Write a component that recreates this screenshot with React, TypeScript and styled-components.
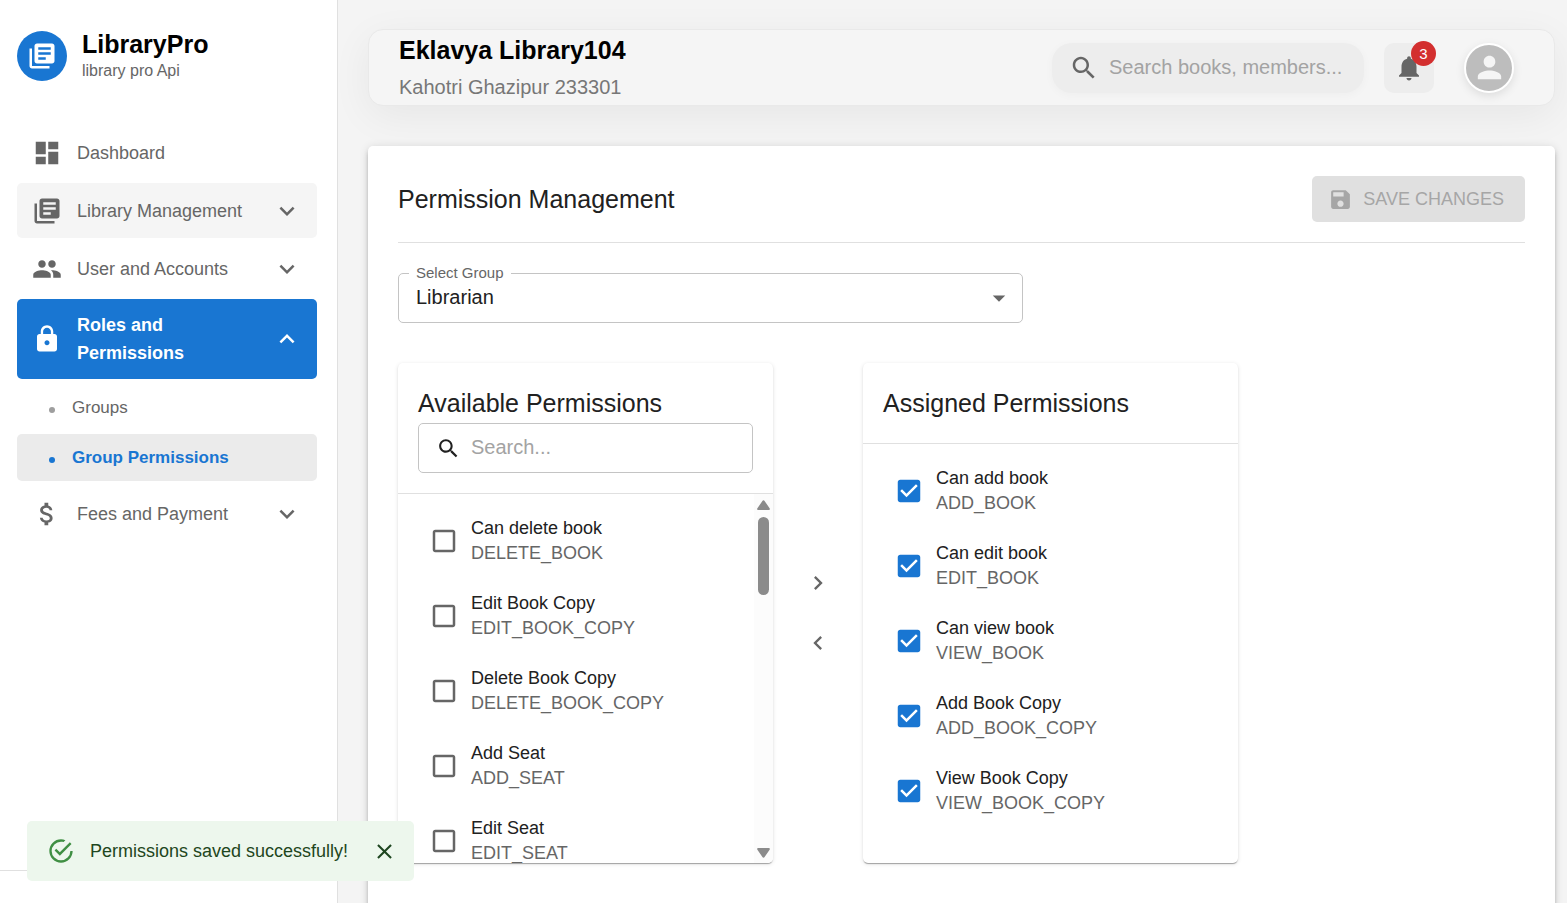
import React, { useState } from 'react';
import styled, { createGlobalStyle, css } from 'styled-components';

const color = {
  primary: '#1976d2',
  text: '#212121',
  muted: '#666666',
  line: '#e0e0e0',
  outline: '#c4c4c4',
  page: '#f4f4f4',
};

const iconPaths = {
  library:
    'M4 6H2v14c0 1.1.9 2 2 2h14v-2H4V6zm16-4H8c-1.1 0-2 .9-2 2v12c0 1.1.9 2 2 2h12c1.1 0 2-.9 2-2V4c0-1.1-.9-2-2-2zm-1 9H9V9h10v2zm-4 4H9v-2h6v2zm4-8H9V5h10v2z',
  dashboard: 'M3 13h8V3H3v10zm0 8h8v-6H3v6zm10 0h8V11h-8v10zm0-18v6h8V3h-8z',
  people:
    'M16 11c1.66 0 2.99-1.34 2.99-3S17.66 5 16 5c-1.66 0-3 1.34-3 3s1.34 3 3 3zm-8 0c1.66 0 2.99-1.34 2.99-3S9.66 5 8 5C6.34 5 5 6.34 5 8s1.34 3 3 3zm0 2c-2.33 0-7 1.17-7 3.5V19h14v-2.5c0-2.33-4.67-3.5-7-3.5zm8 0c-.29 0-.62.02-.97.05 1.16.84 1.97 1.97 1.97 3.45V19h6v-2.5c0-2.33-4.67-3.5-7-3.5z',
  lock: 'M18 8h-1V6c0-2.76-2.24-5-5-5S7 3.24 7 6v2H6c-1.1 0-2 .9-2 2v10c0 1.1.9 2 2 2h12c1.1 0 2-.9 2-2V10c0-1.1-.9-2-2-2zm-6 9c-1.1 0-2-.9-2-2s.9-2 2-2 2 .9 2 2-.9 2-2 2zm3.1-9H8.9V6c0-1.71 1.39-3.1 3.1-3.1 1.71 0 3.1 1.39 3.1 3.1v2z',
  money:
    'M11.8 10.9c-2.27-.59-3-1.2-3-2.15 0-1.09 1.01-1.85 2.7-1.85 1.78 0 2.44.85 2.5 2.1h2.21c-.07-1.72-1.12-3.3-3.21-3.81V3h-3v2.16c-1.94.42-3.5 1.68-3.5 3.61 0 2.31 1.91 3.46 4.7 4.13 2.5.6 3 1.48 3 2.41 0 .69-.49 1.79-2.7 1.79-2.06 0-2.87-.92-2.98-2.1h-2.2c.12 2.19 1.76 3.42 3.68 3.83V21h3v-2.15c1.95-.37 3.5-1.5 3.5-3.55 0-2.84-2.43-3.81-4.7-4.4z',
  expandMore: 'M16.59 8.59 12 13.17 7.41 8.59 6 10l6 6 6-6z',
  expandLess: 'M12 8l-6 6 1.41 1.41L12 10.83l4.59 4.58L18 14z',
  search:
    'M15.5 14h-.79l-.28-.27C15.41 12.59 16 11.11 16 9.5 16 5.91 13.09 3 9.5 3S3 5.91 3 9.5 5.91 16 9.5 16c1.61 0 3.09-.59 4.23-1.57l.27.28v.79l5 4.99L20.49 19l-4.99-5zm-6 0C7.01 14 5 11.99 5 9.5S7.01 5 9.5 5 14 7.01 14 9.5 11.99 14 9.5 14z',
  bell: 'M12 22c1.1 0 2-.9 2-2h-4c0 1.1.89 2 2 2zm6-6v-5c0-3.07-1.64-5.64-4.5-6.32V4c0-.83-.67-1.5-1.5-1.5s-1.5.67-1.5 1.5v.68C7.63 5.36 6 7.92 6 11v5l-2 2v1h16v-1l-2-2z',
  person:
    'M12 12c2.21 0 4-1.79 4-4s-1.79-4-4-4-4 1.79-4 4 1.79 4 4 4zm0 2c-2.67 0-8 1.34-8 4v2h16v-2c0-2.66-5.33-4-8-4z',
  save: 'M17 3H5c-1.11 0-2 .9-2 2v14c0 1.1.89 2 2 2h14c1.1 0 2-.9 2-2V7l-4-4zm-5 16c-1.66 0-3-1.34-3-3s1.34-3 3-3 3 1.34 3 3-1.34 3-3 3zm3-10H5V5h10v4z',
  dropDown: 'M7 10l5 5 5-5z',
  boxOn: 'M19 3H5c-1.11 0-2 .9-2 2v14c0 1.1.89 2 2 2h14c1.11 0 2-.9 2-2V5c0-1.1-.89-2-2-2zm-9 14l-5-5 1.41-1.41L10 14.17l7.59-7.59L19 8l-9 9z',
  boxOff: 'M19 5v14H5V5h14m0-2H5c-1.1 0-2 .9-2 2v14c0 1.1.9 2 2 2h14c1.1 0 2-.9 2-2V5c0-1.1-.9-2-2-2z',
  right: 'M10 6 8.59 7.41 13.17 12l-4.58 4.59L10 18l6-6z',
  left: 'M15.41 7.41 14 6l-6 6 6 6 1.41-1.41L10.83 12z',
  close: 'M19 6.41 17.59 5 12 10.59 6.41 5 5 6.41 10.59 12 5 17.59 6.41 19 12 13.41 17.59 19 19 17.59 13.41 12z',
  success:
    'M20,12A8,8 0 0,1 12,20A8,8 0 0,1 4,12A8,8 0 0,1 12,4C12.76,4 13.5,4.11 14.2,4.31L15.77,2.74C14.61,2.26 13.34,2 12,2A10,10 0 0,0 2,12A10,10 0 0,0 12,22A10,10 0 0,0 22,12M7.91,10.08L6.5,11.5L11,16L21,6L19.59,4.58L11,13.17L7.91,10.08Z',
};

type IconProps = { name: keyof typeof iconPaths; size?: number; className?: string };

function Icon({ name, size = 30, className }: IconProps) {
  return (
    <svg
      className={className}
      width={size}
      height={size}
      viewBox="0 0 24 24"
      fill="currentColor"
      aria-hidden="true"
    >
      <path d={iconPaths[name]} />
    </svg>
  );
}

const GlobalStyle = createGlobalStyle`
  *, *::before, *::after { box-sizing: border-box; }
  body {
    margin: 0;
    background: ${color.page};
    color: ${color.text};
    font-family: Arial, "Liberation Sans", Helvetica, sans-serif;
    font-size: 18px;
  }
  button, input, select { font: inherit; color: inherit; }
  button { border: 0; background: none; padding: 0; cursor: pointer; }
  h1, h2, p, ul { margin: 0; padding: 0; font-weight: 400; }
  ul { list-style: none; }
  svg { display: block; flex: none; }
`;

const Shell = styled.div`
  display: flex;
  height: 100vh;
  overflow: hidden;
`;

/* Sidebar */

const Sidebar = styled.aside`
  flex: none;
  width: 338px;
  display: flex;
  flex-direction: column;
  background: #fff;
  border-right: 1px solid ${color.line};
`;

const Brand = styled.div`
  display: flex;
  align-items: center;
  gap: 15px;
  padding: 29px 17px 42px;
`;

const BrandMark = styled.div`
  width: 50px;
  height: 50px;
  border-radius: 50%;
  display: grid;
  place-items: center;
  background: ${color.primary};
  color: #fff;
`;

const BrandName = styled.p`
  font-size: 25px;
  line-height: 30px;
  font-weight: 700;
  color: #000;
`;

const BrandCaption = styled.p`
  font-size: 16px;
  line-height: 24px;
  color: ${color.muted};
`;

const Nav = styled.nav`
  flex: 1;
  display: flex;
  flex-direction: column;
  gap: 3px;
  padding: 0 20px 0 17px;
`;

const NavButton = styled.button<{ $state?: 'hovered' | 'active' }>`
  display: flex;
  align-items: center;
  gap: 15px;
  width: 100%;
  min-height: 55px;
  padding: 12px 15px;
  border-radius: 5px;
  text-align: left;
  line-height: 28px;
  color: ${color.muted};
  ${(p) => p.$state === 'hovered' && css`background: #f5f5f5;`}
  ${(p) =>
    p.$state === 'active' &&
    css`
      background: ${color.primary};
      color: #fff;
      font-weight: 700;
    `}
`;

const NavLabel = styled.span`
  flex: 1;
`;

const SubNav = styled.ul`
  display: flex;
  flex-direction: column;
  gap: 3px;
  padding: 2px 0;
`;

const SubLink = styled.a<{ $current?: boolean }>`
  display: flex;
  align-items: center;
  gap: 17px;
  height: 47px;
  padding-left: 32px;
  border-radius: 5px;
  font-size: 17px;
  line-height: 25px;
  text-decoration: none;
  color: ${(p) => (p.$current ? color.primary : color.muted)};
  font-weight: ${(p) => (p.$current ? 700 : 400)};
  background: ${(p) => (p.$current ? '#ebebeb' : 'transparent')};

  &::before {
    content: '';
    width: 6px;
    height: 6px;
    margin-top: 4px;
    border-radius: 50%;
    background: ${(p) => (p.$current ? color.primary : '#9e9e9e')};
  }
`;

const SidebarFooter = styled.div`
  height: 33px;
  border-top: 1px solid ${color.line};
`;

/* Top bar */

const Main = styled.main`
  flex: 1;
  min-width: 0;
  overflow: auto;
  scrollbar-width: none;
  padding: 29px 12px 0 30px;
`;

const TopBar = styled.header`
  display: flex;
  align-items: center;
  height: 77px;
  margin-bottom: 40px;
  padding: 0 40px 0 30px;
  border: 1px solid #e9e9e9;
  border-radius: 15px;
  background: #f5f5f5;
  box-shadow: 0 10px 40px rgba(0, 0, 0, 0.06);
`;

const LibraryInfo = styled.div`
  flex: 1;
`;

const LibraryName = styled.h1`
  font-size: 25px;
  line-height: 38px;
  font-weight: 700;
  color: #000;
`;

const LibraryAddress = styled.p`
  font-size: 20px;
  line-height: 36px;
  color: #777;
`;

const TopSearch = styled.label`
  display: flex;
  align-items: center;
  gap: 10px;
  width: 312px;
  height: 50px;
  margin-right: 20px;
  padding: 0 16px 0 17px;
  border-radius: 20px;
  background: #ededed;
  color: ${color.muted};
  box-shadow: 0 2px 10px rgba(0, 0, 0, 0.03);
`;

const BareInput = styled.input`
  flex: 1;
  min-width: 0;
  border: 0;
  padding: 0 0 2px;
  outline: 0;
  background: transparent;
  font-size: 20px;
  line-height: 30px;

  &::placeholder {
    color: #a3a3a3;
    opacity: 1;
  }
`;

const BellButton = styled.button`
  position: relative;
  display: grid;
  place-items: center;
  width: 50px;
  height: 50px;
  margin-right: 30px;
  border-radius: 10px;
  background: #ededed;
  color: ${color.muted};
`;

const Badge = styled.span`
  position: absolute;
  top: -2px;
  right: -2px;
  width: 25px;
  height: 25px;
  border-radius: 50%;
  background: #d32f2f;
  color: #fff;
  font-size: 15px;
  line-height: 25px;
  text-align: center;
`;

const Avatar = styled.button`
  width: 50px;
  height: 50px;
  display: grid;
  place-items: center;
  border: 2px solid #fff;
  border-radius: 50%;
  background: #bdbdbd;
  color: #f5f5f5;
  box-shadow: 0 3px 10px rgba(0, 0, 0, 0.1);
`;

/* Permission card */

const Card = styled.section`
  padding: 30px 30px 60px;
  border-radius: 5px;
  background: #fff;
  box-shadow:
    0 4px 4px -2px rgba(0, 0, 0, 0.2),
    0 4px 5px rgba(0, 0, 0, 0.14),
    0 1px 10px rgba(0, 0, 0, 0.12);
`;

const CardHead = styled.div`
  display: flex;
  align-items: center;
  justify-content: space-between;
  padding-bottom: 20px;
  border-bottom: 1px solid ${color.line};
`;

const Title = styled.h2`
  font-size: 25px;
  line-height: 40px;
`;

const SaveButton = styled.button`
  display: flex;
  align-items: center;
  gap: 10px;
  height: 46px;
  padding: 0 21px 0 16px;
  border-radius: 5px;
  background: #e0e0e0;
  color: #a6a6a6;
  text-transform: uppercase;
`;

const GroupField = styled.div`
  position: relative;
  max-width: 625px;
  margin: 30px 0 40px;
`;

const GroupLabel = styled.label`
  position: absolute;
  top: -10px;
  left: 11px;
  padding: 0 7px;
  background: #fff;
  font-size: 15px;
  line-height: 20px;
  color: ${color.muted};
`;

const GroupSelect = styled.select`
  display: block;
  width: 100%;
  height: 50px;
  padding: 0 40px 2px 17px;
  border: 1px solid ${color.outline};
  border-radius: 5px;
  appearance: none;
  background: transparent;
  font-size: 20px;
`;

const SelectArrow = styled(Icon)`
  position: absolute;
  top: 10px;
  right: 9px;
  color: ${color.muted};
  pointer-events: none;
`;

const Transfer = styled.div`
  display: flex;
  align-items: center;
`;

const Panel = styled.section`
  flex: 0 1 375px;
  display: flex;
  flex-direction: column;
  height: 500px;
  overflow: hidden;
  border-radius: 5px;
  background: #fff;
  box-shadow:
    0 2px 1px -1px rgba(0, 0, 0, 0.2),
    0 1px 1px rgba(0, 0, 0, 0.14),
    0 1px 4px rgba(0, 0, 0, 0.12);
`;

const PanelHead = styled.div`
  padding: 20px;
  border-bottom: 1px solid ${color.line};
`;

const PanelSearch = styled.label`
  display: flex;
  align-items: center;
  gap: 10px;
  height: 50px;
  padding: 0 17px;
  border: 1px solid ${color.outline};
  border-radius: 5px;
`;

const PanelBody = styled.div`
  flex: 1;
  min-height: 0;
  display: flex;
`;

const List = styled.ul`
  flex: 1;
  overflow: auto;
  scrollbar-width: none;
  padding: 9px 0;
`;

const Row = styled.label`
  display: flex;
  align-items: center;
  gap: 12px;
  height: 75px;
  padding-left: 31px;
  line-height: 25px;
  cursor: pointer;
`;

const Tick = styled.span<{ $on: boolean }>`
  display: grid;
  color: ${(p) => (p.$on ? color.primary : color.muted)};

  & > * {
    grid-area: 1 / 1;
  }

  input {
    width: 30px;
    height: 30px;
    margin: 0;
    opacity: 0;
    cursor: pointer;
  }
`;

const RowText = styled.span`
  display: flex;
  flex-direction: column;
`;

const Code = styled.span`
  color: ${color.muted};
`;

const ScrollTrack = styled.div`
  width: 19px;
  display: flex;
  flex-direction: column;
  align-items: center;
  justify-content: space-between;
  padding: 6px 0 5px;
  background: #fcfcfc;
  color: #8b8b8b;
`;

const ScrollThumb = styled.div`
  width: 11px;
  height: 78px;
  margin: 7px 0 auto;
  border-radius: 6px;
  background: #8b8b8b;
`;

const MoveButtons = styled.div`
  width: 90px;
  display: flex;
  flex-direction: column;
  align-items: center;
  gap: 20px;
  color: ${color.muted};
`;

const MoveButton = styled.button`
  width: 40px;
  height: 40px;
  display: grid;
  place-items: center;
  border-radius: 50%;
`;

/* Toast */

const Toast = styled.div`
  position: fixed;
  left: 27px;
  bottom: 22px;
  display: flex;
  align-items: center;
  width: 387px;
  height: 60px;
  padding: 0 17px 0 20px;
  border-radius: 5px;
  background: #edf7ed;
  color: #1e4620;
`;

const ToastIcon = styled(Icon)`
  color: #3f8f43;
`;

const ToastText = styled.p`
  flex: 1;
  padding-left: 15px;
  line-height: 25px;
`;

type Permission = { name: string; code: string };

const available: Permission[] = [
  { name: 'Can delete book', code: 'DELETE_BOOK' },
  { name: 'Edit Book Copy', code: 'EDIT_BOOK_COPY' },
  { name: 'Delete Book Copy', code: 'DELETE_BOOK_COPY' },
  { name: 'Add Seat', code: 'ADD_SEAT' },
  { name: 'Edit Seat', code: 'EDIT_SEAT' },
];

const assigned: Permission[] = [
  { name: 'Can add book', code: 'ADD_BOOK' },
  { name: 'Can edit book', code: 'EDIT_BOOK' },
  { name: 'Can view book', code: 'VIEW_BOOK' },
  { name: 'Add Book Copy', code: 'ADD_BOOK_COPY' },
  { name: 'View Book Copy', code: 'VIEW_BOOK_COPY' },
];

function PermissionRow({ item, initial }: { item: Permission; initial: boolean }) {
  const [on, setOn] = useState(initial);
  return (
    <li>
      <Row>
        <Tick $on={on}>
          <Icon name={on ? 'boxOn' : 'boxOff'} />
          <input type="checkbox" checked={on} onChange={() => setOn(!on)} />
        </Tick>
        <RowText>
          <span>{item.name}</span>
          <Code>{item.code}</Code>
        </RowText>
      </Row>
    </li>
  );
}

function ScrollArrow({ down }: { down?: boolean }) {
  return (
    <svg width="13" height="10" viewBox="0 0 13 10" fill="currentColor" aria-hidden="true">
      <path
        d={
          down
            ? 'M1.3 0h10.4c1 0 1.5 1 .9 1.8L7.6 9c-.5.9-1.7.9-2.2 0L.4 1.8C-.2 1 .3 0 1.3 0z'
            : 'M1.3 10h10.4c1 0 1.5-1 .9-1.8L7.6 1c-.5-.9-1.7-.9-2.2 0L.4 8.2c-.6.8-.1 1.8.9 1.8z'
        }
      />
    </svg>
  );
}

export default function App() {
  const [toastOpen, setToastOpen] = useState(true);

  return (
    <>
      <GlobalStyle />
      <Shell>
        <Sidebar>
          <Brand>
            <BrandMark>
              <Icon name="library" />
            </BrandMark>
            <div>
              <BrandName>LibraryPro</BrandName>
              <BrandCaption>library pro Api</BrandCaption>
            </div>
          </Brand>
          <Nav>
            <NavButton>
              <Icon name="dashboard" />
              <NavLabel>Dashboard</NavLabel>
            </NavButton>
            <NavButton $state="hovered">
              <Icon name="library" />
              <NavLabel>Library Management</NavLabel>
              <Icon name="expandMore" />
            </NavButton>
            <NavButton>
              <Icon name="people" />
              <NavLabel>User and Accounts</NavLabel>
              <Icon name="expandMore" />
            </NavButton>
            <NavButton $state="active" aria-expanded="true">
              <Icon name="lock" />
              <NavLabel>Roles and Permissions</NavLabel>
              <Icon name="expandLess" />
            </NavButton>
            <SubNav>
              <li>
                <SubLink href="#groups">Groups</SubLink>
              </li>
              <li>
                <SubLink href="#group-permissions" $current aria-current="page">
                  Group Permissions
                </SubLink>
              </li>
            </SubNav>
            <NavButton>
              <Icon name="money" />
              <NavLabel>Fees and Payment</NavLabel>
              <Icon name="expandMore" />
            </NavButton>
          </Nav>
          <SidebarFooter />
        </Sidebar>

        <Main>
          <TopBar>
            <LibraryInfo>
              <LibraryName>Eklavya Library104</LibraryName>
              <LibraryAddress>Kahotri Ghazipur 233301</LibraryAddress>
            </LibraryInfo>
            <TopSearch>
              <Icon name="search" />
              <BareInput type="text" placeholder="Search books, members..." aria-label="Search books, members" />
            </TopSearch>
            <BellButton aria-label="Notifications">
              <Icon name="bell" />
              <Badge>3</Badge>
            </BellButton>
            <Avatar aria-label="Account">
              <Icon name="person" size={35} />
            </Avatar>
          </TopBar>

          <Card>
            <CardHead>
              <Title>Permission Management</Title>
              <SaveButton disabled>
                <Icon name="save" size={25} />
                Save Changes
              </SaveButton>
            </CardHead>

            <GroupField>
              <GroupSelect id="group" defaultValue="Librarian">
                <option>Librarian</option>
              </GroupSelect>
              <GroupLabel htmlFor="group">Select Group</GroupLabel>
              <SelectArrow name="dropDown" />
            </GroupField>

            <Transfer>
              <Panel>
                <PanelHead>
                  <Title>Available Permissions</Title>
                  <PanelSearch>
                    <Icon name="search" size={25} />
                    <BareInput type="text" placeholder="Search..." aria-label="Search permissions" />
                  </PanelSearch>
                </PanelHead>
                <PanelBody>
                  <List>
                    {available.map((item) => (
                      <PermissionRow key={item.code} item={item} initial={false} />
                    ))}
                  </List>
                  <ScrollTrack>
                    <ScrollArrow />
                    <ScrollThumb />
                    <ScrollArrow down />
                  </ScrollTrack>
                </PanelBody>
              </Panel>

              <MoveButtons>
                <MoveButton aria-label="Assign selected">
                  <Icon name="right" size={28} />
                </MoveButton>
                <MoveButton aria-label="Remove selected">
                  <Icon name="left" size={28} />
                </MoveButton>
              </MoveButtons>

              <Panel>
                <PanelHead>
                  <Title>Assigned Permissions</Title>
                </PanelHead>
                <PanelBody>
                  <List>
                    {assigned.map((item) => (
                      <PermissionRow key={item.code} item={item} initial />
                    ))}
                  </List>
                </PanelBody>
              </Panel>
            </Transfer>
          </Card>
        </Main>
      </Shell>

      {toastOpen && (
        <Toast role="alert">
          <ToastIcon name="success" size={28} />
          <ToastText>Permissions saved successfully!</ToastText>
          <button aria-label="Close" onClick={() => setToastOpen(false)}>
            <Icon name="close" size={25} />
          </button>
        </Toast>
      )}
    </>
  );
}
